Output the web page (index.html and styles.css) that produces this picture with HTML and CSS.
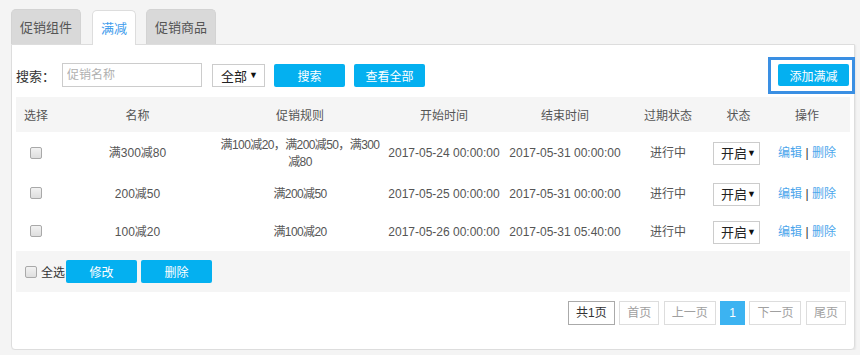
FILE: index.html
```html
<!DOCTYPE html>
<html lang="zh">
<head>
<meta charset="utf-8">
<title>满减</title>
<link rel="stylesheet" href="styles.css">
</head>
<body>
<div class="page">
  <div class="tabs">
    <div class="tab">促销组件</div>
    <div class="tab active">满减</div>
    <div class="tab">促销商品</div>
  </div>
  <div class="panel">
    <div class="toolbar">
      <span class="label">搜索：</span>
      <input class="search-input" type="text" placeholder="促销名称">
      <div class="select select-all"><span>全部</span><span class="caret">▼</span></div>
      <button class="btn">搜索</button>
      <button class="btn">查看全部</button>
      <span class="add-wrap"><button class="btn btn-add">添加满减</button></span>
    </div>
    <table class="grid">
      <colgroup>
        <col class="c1"><col class="c2"><col class="c3"><col class="c4"><col class="c5"><col class="c6"><col class="c7"><col class="c8">
      </colgroup>
      <thead>
        <tr><th>选择</th><th>名称</th><th>促销规则</th><th>开始时间</th><th>结束时间</th><th>过期状态</th><th>状态</th><th>操作</th></tr>
      </thead>
      <tbody>
        <tr class="tall">
          <td><input class="check" type="checkbox"></td>
          <td>满300减80</td>
          <td class="rule">满100减20，满200减50，满300减80</td>
          <td>2017-05-24 00:00:00</td>
          <td>2017-05-31 00:00:00</td>
          <td>进行中</td>
          <td><div class="select select-state"><span>开启</span><span class="caret">▼</span></div></td>
          <td><a class="link">编辑</a> <span class="sep">|</span> <a class="link">删除</a></td>
        </tr>
        <tr>
          <td><input class="check" type="checkbox"></td>
          <td>200减50</td>
          <td class="rule">满200减50</td>
          <td>2017-05-25 00:00:00</td>
          <td>2017-05-31 00:00:00</td>
          <td>进行中</td>
          <td><div class="select select-state"><span>开启</span><span class="caret">▼</span></div></td>
          <td><a class="link">编辑</a> <span class="sep">|</span> <a class="link">删除</a></td>
        </tr>
        <tr>
          <td><input class="check" type="checkbox"></td>
          <td>100减20</td>
          <td class="rule">满100减20</td>
          <td>2017-05-26 00:00:00</td>
          <td>2017-05-31 05:40:00</td>
          <td>进行中</td>
          <td><div class="select select-state"><span>开启</span><span class="caret">▼</span></div></td>
          <td><a class="link">编辑</a> <span class="sep">|</span> <a class="link">删除</a></td>
        </tr>
      </tbody>
    </table>
    <div class="footer-bar">
      <label class="select-all-label"><input class="check" type="checkbox"><span>全选</span></label>
      <button class="btn">修改</button>
      <button class="btn">删除</button>
    </div>
    <div class="pager">
      <span class="pg total">共1页</span>
      <span class="pg">首页</span>
      <span class="pg">上一页</span>
      <span class="pg current">1</span>
      <span class="pg">下一页</span>
      <span class="pg">尾页</span>
    </div>
  </div>
</div>
</body>
</html>
```
FILE: styles.css
```css
* { box-sizing: border-box; }
html, body { margin: 0; padding: 0; }
body {
  background: #f4f4f4;
  font-family: "Liberation Sans", "Noto Sans CJK SC", sans-serif;
  font-size: 12px;
  color: #555;
}
.page {
  padding: 9px 5px 0 11px;
  width: 860px;
}
.tabs {
  display: flex;
  height: 35px;
  align-items: flex-end;
}
.tab {
  height: 35px;
  line-height: 36px;
  padding: 0 8px;
  margin-right: 10px;
  font-size: 13px;
  color: #555;
  background: #d9d9d9;
  border: 1px solid #d3d3d3;
  border-bottom: none;
  border-radius: 5px 5px 0 0;
}
.tab.active {
  background: #fff;
  color: #3f9cec;
  border-color: #ddd;
  margin-left: 1px;
  position: relative;
  z-index: 1;
  margin-bottom: -1px;
  height: 35px;
}
.panel {
  background: #fff;
  border: 1px solid #ddd;
  border-radius: 0 0 4px 4px;
  box-shadow: 1px 1px 2px rgba(0,0,0,0.06);
  height: 306px;
  padding: 0 4px;
}
.toolbar {
  display: flex;
  align-items: center;
  margin-top: 18px;
  height: 24px;
}
.label {
  font-size: 13px;
  color: #333;
  width: 46px;
}
.search-input {
  width: 140px;
  height: 24px;
  border: 1px solid #ccc;
  padding: 0 4px;
  font-family: inherit;
  font-size: 12px;
  color: #333;
  outline: none;
}
.search-input::placeholder { color: #b0b0b0; }
.select {
  display: flex;
  align-items: center;
  justify-content: space-between;
  white-space: nowrap;
  border: 1px solid #ccc;
  background: #fff;
  color: #222;
  font-size: 13px;
  height: 23px;
}
.caret { font-size: 9px; color: #111; }
.select-all {
  width: 53px;
  margin-left: 10px;
  padding: 0 6px 0 8px;
}
.btn {
  width: 71px;
  height: 23px;
  border: none;
  border-radius: 2px;
  background: #04b0f0;
  color: #fff;
  font-family: inherit;
  font-size: 12px;
  padding: 0;
  margin-left: 9px;
}
.add-wrap {
  margin-left: auto;
  margin-right: 1px;
  position: relative;
  display: flex;
}
.btn-add { width: 71px; height: 22px; margin: 0; }
.add-wrap::after {
  content: "";
  position: absolute;
  left: -10px;
  right: -6px;
  top: -7px;
  bottom: -8px;
  border: 3px solid #3a8fe3;
}
.grid {
  width: 834px;
  margin-top: 10px;
  border-collapse: collapse;
  table-layout: fixed;
}
.c1 { width: 40px; }
.c2 { width: 163px; }
.c3 { width: 162px; }
.c4 { width: 126px; }
.c5 { width: 116px; }
.c6 { width: 90px; }
.c7 { width: 51px; }
.c8 { width: 86px; }
.grid th {
  background: #f5f5f5;
  height: 35px;
  font-weight: normal;
  color: #555;
  padding: 0;
}
.grid td {
  height: 38px;
  padding: 4px 0;
  text-align: center;
  line-height: 17px;
  color: #555;
  vertical-align: middle;
}
.grid tr.tall td { height: 43px; }
.grid td.rule { letter-spacing: -0.6px; }
.check {
  appearance: none;
  -webkit-appearance: none;
  width: 12px;
  height: 12px;
  margin: 0;
  border: 1px solid #a9a9a9;
  border-radius: 2px;
  background: linear-gradient(#f2f2f2, #dedede);
  vertical-align: middle;
  display: inline-block;
}
.grid td:first-child .check { position: relative; top: -1px; }
.select-state {
  width: 47px;
  margin: 0 0 0 -4px;
  padding: 0 5px 0 7px;
  display: inline-flex;
  vertical-align: middle;
}
.link { color: #4ca6ec; text-decoration: none; }
.sep { color: #333; }
.footer-bar {
  display: flex;
  align-items: center;
  width: 834px;
  height: 41px;
  background: #f5f5f5;
  padding-left: 9px;
}
.select-all-label {
  display: flex;
  align-items: center;
  color: #333;
}
.select-all-label span { margin-left: 4px; }
.footer-bar .btn { margin-left: 1px; }
.footer-bar .btn + .btn { margin-left: 4px; }
.pager {
  display: flex;
  justify-content: flex-end;
  gap: 4.5px;
  margin-top: 9px;
  margin-right: 4px;
}
.pg {
  height: 24px;
  line-height: 22px;
  padding: 0 7px;
  border: 1px solid #ddd;
  color: #a0a0a0;
  font-size: 12px;
  background: #fff;
}
.pg.total { border-color: #aaa; color: #333; }
.pg.current {
  background: #3cb3f1;
  border-color: #3cb3f1;
  color: #fff;
  padding: 0 8px;
}
```
